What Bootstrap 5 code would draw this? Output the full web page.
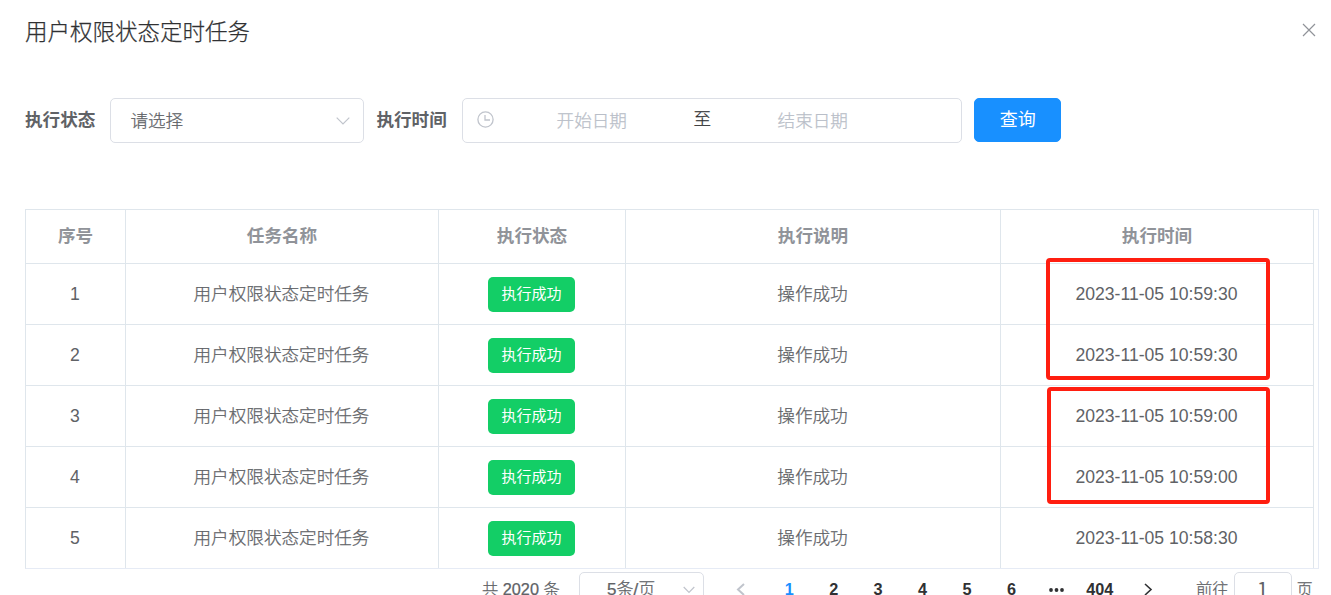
<!DOCTYPE html>
<html lang="zh-CN">
<head>
<meta charset="utf-8">
<meta name="viewport" content="width=device-width, initial-scale=1">
<title>用户权限状态定时任务</title>
<link href="https://cdn.jsdelivr.net/npm/bootstrap@5.3.0/dist/css/bootstrap.min.css" rel="stylesheet">
<style>
  body { font-family: "Liberation Sans", "Noto Sans CJK SC", sans-serif; font-size: 17.6px; color: #606266; background: #fff; }
  .dialog { width: 1331px; height: 595px; }
  .dialog-head { height: 98px; padding: 13px 15px 0 25px; }
  .dialog-title { font-size: 22.5px; line-height: 40px; color: #303133; font-weight: 300; -webkit-text-stroke: .25px; }
  .dialog-close { width: 14px; height: 14px; margin-top: 10px; }
  .cjk-light { font-weight: 300; -webkit-text-stroke: .25px; }
  .filters { height: 111px; padding-left: 25px; }
  .filters label { font-weight: 700; line-height: 44px; }
  .field { border: 1px solid #dcdfe6; border-radius: 5px; height: 45px; }
  .field-status { width: 254px; margin: 0 13px 0 15px; padding: 0 13px 0 19px; }
  .filters label + .field-status + label { margin-left: -1px; }
  .field-status .cjk-light, .range-part { padding-top: 2px; }
  .field-range { width: 500px; margin: 0 12px 0 15px; padding-left: 14px; color: #b9bec8; }
  .range-part { width: 196px; }
  .range-sep { width: 25px; color: #303133; line-height: 40px; padding-bottom: 3px; }
  .btn-query { --bs-btn-bg: #1890ff; --bs-btn-border-color: #1890ff; --bs-btn-color: #fff; width: 87px; height: 44px; border-radius: 5px; font-size: 18px; padding: 0 0 0 1px; line-height: 40px; font-weight: 400; }
  .grid-wrap { width: 1294px; height: 360px; margin-left: 25px; border: 1px solid #dfe6ec; border-right-color: #e6ebf5; border-bottom-color: #e6ebf5; }
  .task-grid { width: 1288px; table-layout: fixed; border-collapse: separate; border-spacing: 0; text-align: center; }
  .task-grid th, .task-grid td { padding: 0; border: 0 solid #dfe6ec; border-width: 0 1px 1px 0; vertical-align: middle; }
  .task-grid th { height: 54px; color: #909399; font-weight: 700; line-height: 24px; padding-bottom: 2px; }
  .task-grid td { height: 61px; font-weight: 300; line-height: 24px; padding-right: 1px; -webkit-text-stroke: .25px; }
  .task-grid td.num { font-weight: 400; -webkit-text-stroke: 0; }
  .task-grid tr:last-child td { height: 60px; border-bottom-width: 0; }
  .state-tag { display: block; width: 87px; height: 35px; margin: 0 auto; border-radius: 5px; background: #13ce66; color: #fff; font-size: 15px; line-height: 33px; font-weight: 400; -webkit-text-stroke: 0; }
  .mark-box { position: absolute; border: 4px solid #ff1e10; border-radius: 4px; }
  .mark-a { left: 1020px; top: 48px; width: 224px; height: 122px; }
  .mark-b { left: 1021px; top: 177px; width: 223px; height: 117px; }
  .pager { padding: 3px 0 0 482px; font-size: 16.25px; line-height: 35px; }
  .pager-total { width: 79px; }
  .pager-size { width: 125px; height: 35px; margin-left: 18px; padding: 0 8px 0 27px; font-size: 17px; }
  .pager-num { width: 44.45px; text-align: center; font-weight: 700; color: #303133; }
  .pager-num.on { color: #1890ff; }
  .pager-jump { width: 58px; height: 35px; margin: 0 5px; text-align: center; font-size: 20px; font-family: "Noto Sans CJK SC", sans-serif; line-height: 31px; }
  svg { display: block; fill: none; flex: none; }
</style>
</head>
<body>
<main class="dialog overflow-hidden">
  <header class="dialog-head d-flex justify-content-between align-items-start">
    <h1 class="dialog-title m-0">用户权限状态定时任务</h1>
    <svg class="dialog-close" viewBox="0 0 14 14" stroke="#909399" stroke-width="1.2"><path d="M1 1 13 13M13 1 1 13"/></svg>
  </header>

  <form class="filters d-flex align-items-start">
    <label>执行状态</label>
    <div class="field field-status d-flex align-items-center justify-content-between">
      <span class="cjk-light">请选择</span>
      <svg width="14" height="8" viewBox="0 0 14 8" stroke="#c0c4cc" stroke-width="1.2"><path d="M.7.7 7 7 13.3.7"/></svg>
    </div>
    <label>执行时间</label>
    <div class="field field-range d-flex align-items-center">
      <svg width="17" height="17" viewBox="0 0 17 17" stroke="#c0c4cc" stroke-width="1.3" style="margin-top:-2px"><circle cx="8.5" cy="8.5" r="7.6"/><path d="M8 4v5h5"/></svg>
      <span class="range-part text-center cjk-light">开始日期</span>
      <span class="range-sep text-center cjk-light">至</span>
      <span class="range-part text-center cjk-light">结束日期</span>
    </div>
    <button type="button" class="btn btn-query">查询</button>
  </form>

  <section class="grid-wrap position-relative">
    <table class="task-grid">
      <colgroup><col style="width:100px"><col style="width:313px"><col style="width:187px"><col style="width:375px"><col style="width:313px"></colgroup>
      <thead><tr><th>序号</th><th>任务名称</th><th>执行状态</th><th>执行说明</th><th>执行时间</th></tr></thead>
      <tbody>
        <tr><td class="num">1</td><td>用户权限状态定时任务</td><td><span class="state-tag">执行成功</span></td><td>操作成功</td><td class="num">2023-11-05 10:59:30</td></tr>
        <tr><td class="num">2</td><td>用户权限状态定时任务</td><td><span class="state-tag">执行成功</span></td><td>操作成功</td><td class="num">2023-11-05 10:59:30</td></tr>
        <tr><td class="num">3</td><td>用户权限状态定时任务</td><td><span class="state-tag">执行成功</span></td><td>操作成功</td><td class="num">2023-11-05 10:59:00</td></tr>
        <tr><td class="num">4</td><td>用户权限状态定时任务</td><td><span class="state-tag">执行成功</span></td><td>操作成功</td><td class="num">2023-11-05 10:59:00</td></tr>
        <tr><td class="num">5</td><td>用户权限状态定时任务</td><td><span class="state-tag">执行成功</span></td><td>操作成功</td><td class="num">2023-11-05 10:58:30</td></tr>
      </tbody>
    </table>
    <div class="mark-box mark-a"></div>
    <div class="mark-box mark-b"></div>
  </section>

  <nav class="pager d-flex align-items-start text-nowrap">
    <span class="pager-total cjk-light">共 2020 条</span>
    <div class="field pager-size d-flex align-items-center justify-content-between">
      <span class="cjk-light">5条/页</span>
      <svg width="12" height="8" viewBox="0 0 12 8" stroke="#c0c4cc" stroke-width="1.2"><path d="M.7 1 6 6.5 11.3 1"/></svg>
    </div>
    <svg width="63" height="35" viewBox="0 0 63 35" stroke="#c0c4cc" stroke-width="2"><path d="M40 12 34 17.5 40 23"/></svg>
    <span class="pager-num on">1</span>
    <span class="pager-num">2</span>
    <span class="pager-num">3</span>
    <span class="pager-num">4</span>
    <span class="pager-num">5</span>
    <span class="pager-num">6</span>
    <svg width="44" height="35" viewBox="0 0 44 35"><g fill="#303133"><circle cx="17" cy="18" r="1.9"/><circle cx="22.5" cy="18" r="1.9"/><circle cx="28" cy="18" r="1.9"/></g></svg>
    <span class="pager-num">404</span>
    <svg width="74" height="35" viewBox="0 0 74 35" stroke="#303133" stroke-width="1.6"><path d="M23 12 29 17.5 23 23"/></svg>
    <span class="cjk-light">前往</span>
    <div class="field pager-jump">1</div>
    <span class="cjk-light">页</span>
  </nav>
</main>
<script src="https://cdn.jsdelivr.net/npm/bootstrap@5.3.0/dist/js/bootstrap.bundle.min.js"></script>
</body>
</html>
